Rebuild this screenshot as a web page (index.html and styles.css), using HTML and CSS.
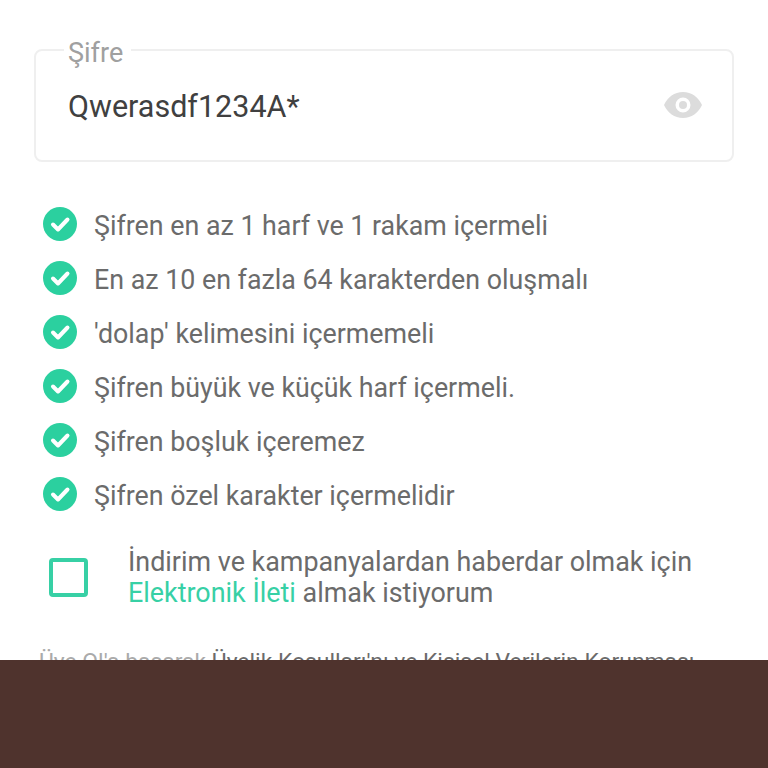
FILE: index.html
```html
<!DOCTYPE html>
<html lang="tr">

<head>
    <meta charset="UTF-8">
    <meta name="viewport" content="width=device-width, initial-scale=1.0">
    <title>Üye Ol</title>
    <link rel="stylesheet" href="styles.css">
</head>

<body>
    <main class="form">
        <fieldset class="field">
            <legend class="field-label">Şifre</legend>
            <span class="field-value">Qwerasdf1234A*</span>
            <svg class="eye" viewBox="0 0 38 26" width="38" height="26">
                <path fill="#dcdcdc" fill-rule="evenodd"
                    d="M19 0C10.500 0 3.500 5.300 0 13c3.500 7.700 10.500 13 19 13s15.500-5.300 19-13C34.500 5.300 27.500 0 19 0z
                    M19 20.500a7.500 7.500 0 1 1 0-15 7.500 7.500 0 0 1 0 15z" />
                <circle fill="#dcdcdc" cx="19" cy="13" r="4" />
            </svg>
        </fieldset>

        <ul class="rules">
            <li class="rule"><svg class="tick" viewBox="0 0 34 34"><circle cx="17" cy="17" r="17" /><path d="M10 17.500l5 5 9.500-10" /></svg>Şifren en az 1 harf ve 1 rakam içermeli</li>
            <li class="rule"><svg class="tick" viewBox="0 0 34 34"><circle cx="17" cy="17" r="17" /><path d="M10 17.500l5 5 9.500-10" /></svg>En az 10 en fazla 64 karakterden oluşmalı</li>
            <li class="rule"><svg class="tick" viewBox="0 0 34 34"><circle cx="17" cy="17" r="17" /><path d="M10 17.500l5 5 9.500-10" /></svg>'dolap' kelimesini içermemeli</li>
            <li class="rule"><svg class="tick" viewBox="0 0 34 34"><circle cx="17" cy="17" r="17" /><path d="M10 17.500l5 5 9.500-10" /></svg>Şifren büyük ve küçük harf içermeli.</li>
            <li class="rule"><svg class="tick" viewBox="0 0 34 34"><circle cx="17" cy="17" r="17" /><path d="M10 17.500l5 5 9.500-10" /></svg>Şifren boşluk içeremez</li>
            <li class="rule"><svg class="tick" viewBox="0 0 34 34"><circle cx="17" cy="17" r="17" /><path d="M10 17.500l5 5 9.500-10" /></svg>Şifren özel karakter içermelidir</li>
        </ul>

        <div class="consent">
            <span class="checkbox"></span>
            <p class="consent-text">İndirim ve kampanyalardan haberdar olmak için <a href="#">Elektronik İleti</a> almak istiyorum</p>
        </div>

        <p class="terms">Üye Ol'a basarak <span class="terms-link">Üyelik Koşulları'nı ve Kişisel Verilerin Korunması</span></p>
    </main>
    <div class="bottom-bar"></div>
</body>

</html>
```

FILE: styles.css
```css
* {
    margin: 0;
    padding: 0;
    box-sizing: border-box;
}

body {
    display: flex;
    flex-direction: column;
    height: 768px;
    overflow: hidden;
    background-color: #fff;
    font-family: Roboto, sans-serif;
    color: #6b6b6b;
}

.form {
    flex: 1;
    min-height: 0;
    overflow: hidden;
    padding: 32px 34px 0;
}

/* Password field */
.field {
    display: flex;
    align-items: center;
    justify-content: space-between;
    height: 130px;
    padding: 0 30px 0 32px;
    border: 2px solid #efefef;
    border-radius: 8px;
}

.field-label {
    margin-left: -4px;
    padding: 6px 8px 0 4px;
    font-size: 27px;
    line-height: 30px;
    color: #a0a0a0;
}

.field-value {
    display: block;
    margin-bottom: 16px;
    font-size: 30.500px;
    color: #404040;
}

.eye {
    margin-bottom: 18px;
}

/* Password rules */
.rules {
    margin-top: 36px;
    list-style: none;
}

.rule {
    display: flex;
    align-items: center;
    gap: 17px;
    height: 54px;
    padding: 2px 0 0 9px;
    font-size: 26.800px;
}

.tick {
    flex: none;
    width: 34px;
    height: 34px;
    margin-top: -4px;
}

.tick circle {
    fill: #2bd09f;
}

.tick path {
    fill: none;
    stroke: #fff;
    stroke-width: 4;
    stroke-linecap: round;
    stroke-linejoin: round;
}

/* Campaign consent */
.consent {
    display: flex;
    align-items: center;
    gap: 40px;
    margin-top: 25px;
    padding-left: 15px;
}

.checkbox {
    flex: none;
    width: 39px;
    height: 39px;
    margin-bottom: 2px;
    border: 4px solid #37d0a5;
    border-radius: 4px;
}

.consent-text {
    font-size: 26.900px;
    line-height: 31px;
}

.consent-text a {
    color: #37d0a5;
    text-decoration: none;
}

.terms {
    margin-top: 39px;
    padding-left: 5px;
    font-size: 22.900px;
    white-space: nowrap;
    color: #aaa;
}

.terms-link {
    color: #6b6b6b;
}

.bottom-bar {
    flex: none;
    height: 108px;
    background-color: #4f332d;
}
```
